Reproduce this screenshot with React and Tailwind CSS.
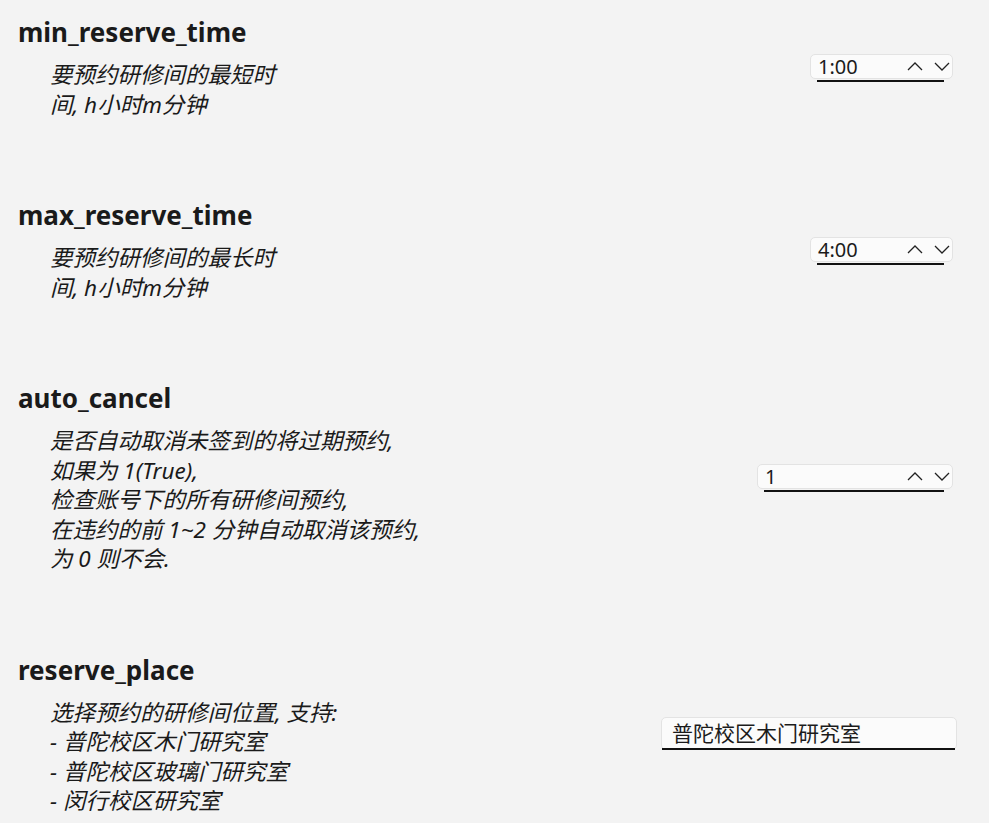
const SETTINGS = [
  {
    key: 'min_reserve_time',
    lines: ['要预约研修间的最短时', '间, h小时m分钟'],
    control: 'number',
    value: '1:00',
    width: 'w-[143px]',
  },
  {
    key: 'max_reserve_time',
    lines: ['要预约研修间的最长时', '间, h小时m分钟'],
    control: 'number',
    value: '4:00',
    width: 'w-[143px]',
  },
  {
    key: 'auto_cancel',
    lines: [
      '是否自动取消未签到的将过期预约,',
      '如果为 1(True),',
      '检查账号下的所有研修间预约,',
      '在违约的前 1~2 分钟自动取消该预约,',
      '为 0 则不会.',
    ],
    control: 'number',
    value: '1',
    width: 'w-[196px]',
  },
  {
    key: 'reserve_place',
    lines: ['选择预约的研修间位置, 支持:', '- 普陀校区木门研究室', '- 普陀校区玻璃门研究室', '- 闵行校区研究室'],
    control: 'text',
    value: '普陀校区木门研究室',
  },
]

function Chevron({ up }) {
  return (
    <svg width="16" height="9" viewBox="0 0 16 9" fill="none" stroke="#222" strokeWidth="1.3">
      <polyline points={up ? '1,8 8,1 15,8' : '1,1 8,8 15,1'} />
    </svg>
  )
}

function NumberBox({ value, width }) {
  return (
    <div className={`relative ${width} h-[25px] mr-[36px] rounded-[5px] border border-[#e3e3e3] bg-[#fbfbfb] flex items-center pl-[7px] pr-[2px]`}>
      <span className="flex-1 text-[20px] leading-none text-[#1b1b1b]">{value}</span>
      <div className="mr-[11px] flex"><Chevron up /></div>
      <div className="flex"><Chevron /></div>
      <div className="absolute left-[6px] right-[8px] bottom-[-4px] h-[2px] bg-[#111]" />
    </div>
  )
}

function TextBox({ value }) {
  return (
    <div className="relative w-[296px] h-[33px] mr-[32px] rounded-[5px] border border-[#e3e3e3] bg-[#fbfbfb] flex items-center pl-[10px]">
      <span className="text-[21px] leading-none text-[#1b1b1b]">{value}</span>
      <div className="absolute left-0 right-[1px] bottom-[-1px] h-[2px] bg-[#111]" />
    </div>
  )
}

export default function App() {
  return (
    <div
      className="w-[989px] h-[823px] overflow-hidden bg-[#f3f3f3] pt-[14px] flex flex-col gap-[78px]"
      style={{ fontFamily: '"Noto Sans", "Noto Sans CJK SC", sans-serif' }}
    >
      {SETTINGS.map(s => (
        <div key={s.key} className="flex items-center justify-between">
          <div className="pl-[18px]">
            <p className="text-[26px] leading-[36px] font-bold text-[#1a1a1a]">{s.key}</p>
            <div className="mt-[10px] pl-[32px] italic text-[22.5px] leading-[29.5px] text-[#1a1a1a]">
              {s.lines.map((l, i) => (
                <p key={i} className="whitespace-pre">{l}</p>
              ))}
            </div>
          </div>
          {s.control === 'number' ? (
            <NumberBox value={s.value} width={s.width} />
          ) : (
            <TextBox value={s.value} />
          )}
        </div>
      ))}
    </div>
  )
}
